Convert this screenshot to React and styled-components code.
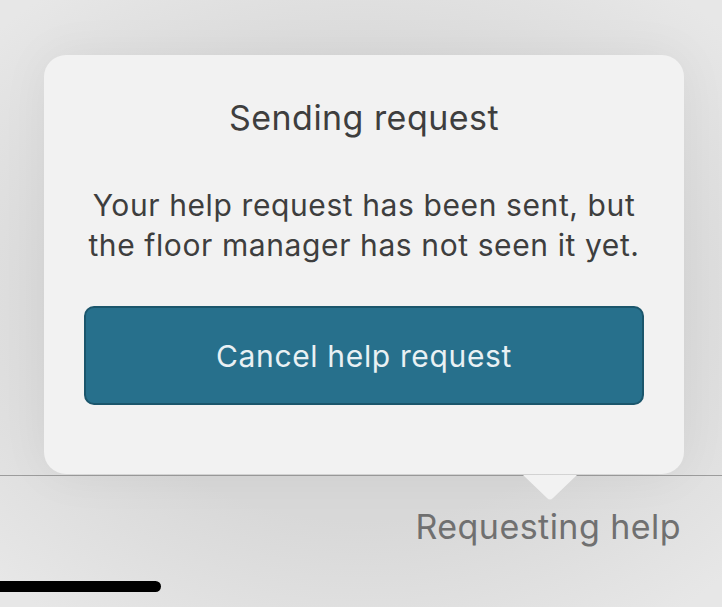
import React from "react";
import styled, { createGlobalStyle } from "styled-components";

const Global = createGlobalStyle`
  html, body {
    margin: 0;
    padding: 0;
    width: 722px;
    height: 607px;
    overflow: hidden;
  }
  body {
    font-family: Inter, "Noto Sans", "Liberation Sans", sans-serif;
    background: radial-gradient(ellipse 70% 65% at 50% 50%, #d8d8d8 55%, #e7e7e7 100%);
  }
`;

const Screen = styled.div`
  position: relative;
  width: 722px;
  height: 607px;
  display: flex;
  flex-direction: column;
`;

const Stage = styled.div`
  height: 476px;
  display: flex;
  padding: 55px 0 0 44px;
  box-sizing: border-box;
  border-bottom: 1px solid #9c9c9c;
`;

const Card = styled.div`
  width: 640px;
  height: 419px;
  box-sizing: border-box;
  background: #f2f2f2;
  border-radius: 22px;
  padding: 42px 40px 0;
  display: flex;
  flex-direction: column;
  align-items: center;
  box-shadow: 0 0 50px rgba(0, 0, 0, 0.05);
`;

const Title = styled.h2`
  margin: 0;
  font-size: 34px;
  line-height: 42px;
  font-weight: 400;
  color: #3e3e3e;
  letter-spacing: 0.45px;
`;

const Message = styled.p`
  margin: 46px 0 0;
  font-size: 30px;
  line-height: 40px;
  font-weight: 400;
  color: #3e3e3e;
  text-align: center;
  letter-spacing: 0.6px;
  white-space: nowrap;
`;

const CancelButton = styled.button`
  margin-top: 41px;
  width: 100%;
  height: 99px;
  border-radius: 10px;
  border: 2px solid #1b566c;
  background: #27708c;
  color: #e9f1f4;
  font-family: inherit;
  font-size: 30px;
  font-weight: 400;
  letter-spacing: 0.65px;
  cursor: pointer;
`;

const Footer = styled.div`
  position: relative;
  flex: 1;
  display: flex;
  flex-direction: column;
  align-items: flex-end;
  padding: 30px 41px 0 0;
`;

const Pointer = styled.svg`
  position: absolute;
  top: -1px;
  left: 523px;
`;

const Status = styled.span`
  font-size: 34px;
  line-height: 42px;
  color: #707070;
  letter-spacing: 0.45px;
`;

const HomeBar = styled.div`
  position: absolute;
  left: 0;
  bottom: 15px;
  width: 161px;
  height: 11px;
  background: #000;
  border-radius: 0 6px 6px 0;
`;

export default function App() {
  return (
    <>
      <Global />
      <Screen>
        <Stage>
          <Card>
            <Title>Sending request</Title>
            <Message>
              Your help request has been sent, but
              <br />
              the floor manager has not seen it yet.
            </Message>
            <CancelButton>Cancel help request</CancelButton>
          </Card>
        </Stage>
        <Footer>
          <Pointer width="54" height="26" viewBox="0 0 54 26">
            <path d="M0 0 H54 L30 23 Q27 26 24 23 Z" fill="#f2f2f2" />
          </Pointer>
          <Status>Requesting help</Status>
        </Footer>
        <HomeBar />
      </Screen>
    </>
  );
}
